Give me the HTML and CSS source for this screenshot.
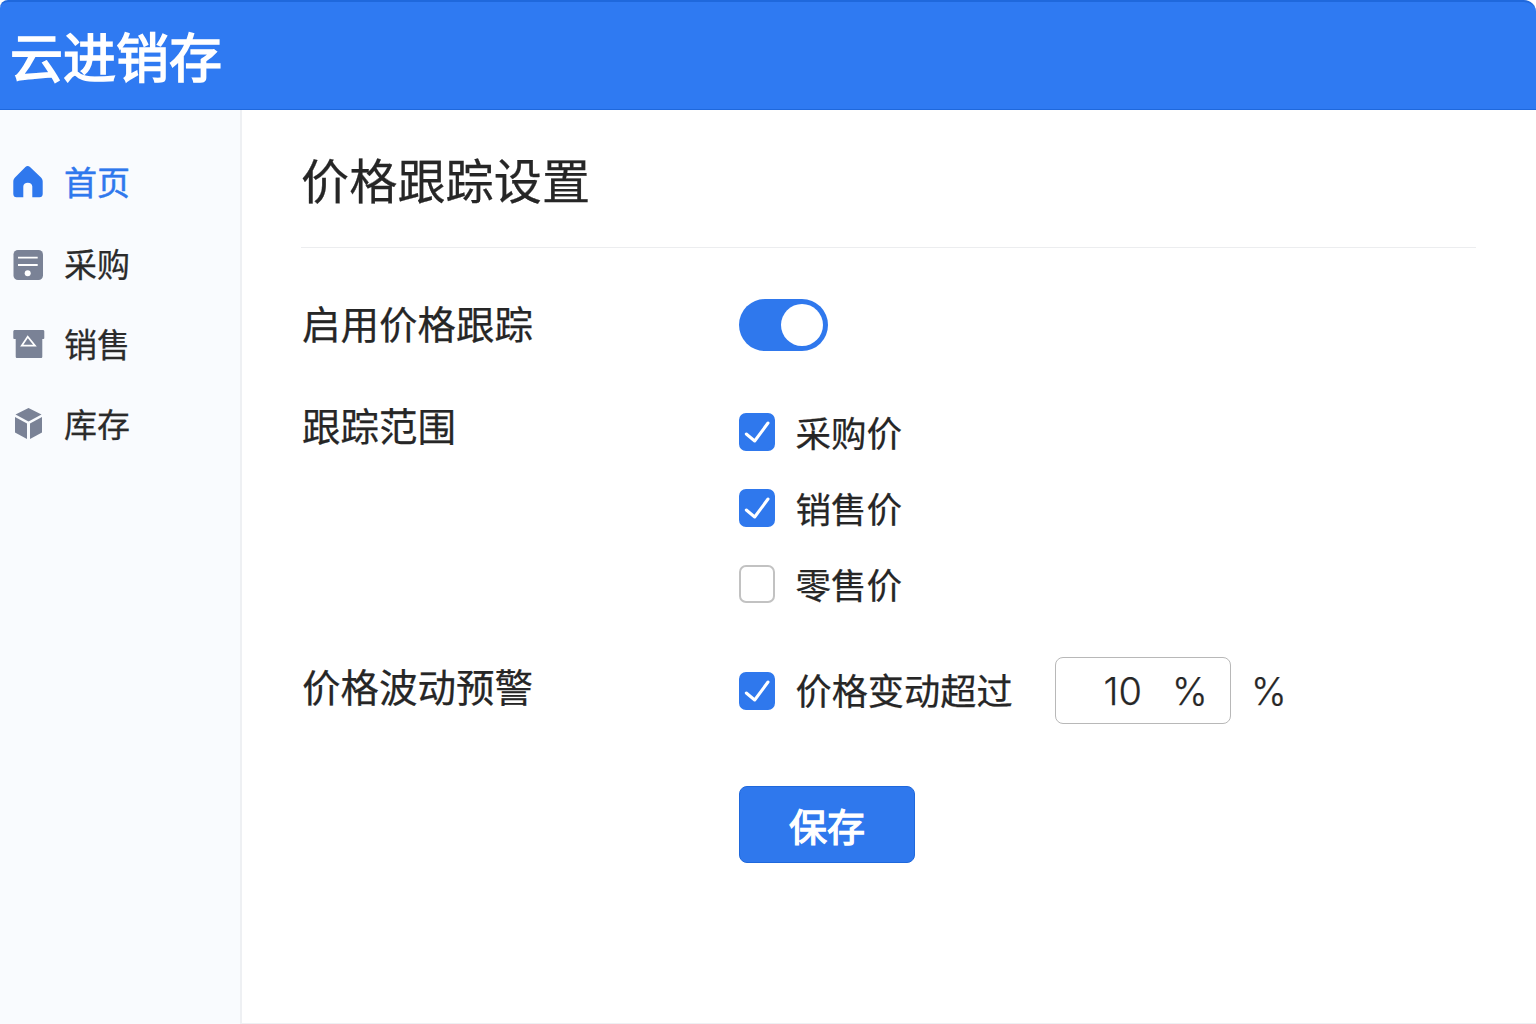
FILE: index.html
```html
<!DOCTYPE html>
<html lang="zh-CN">
<head>
<meta charset="utf-8">
<title>云进销存</title>
<link rel="stylesheet" href="styles.css">
</head>
<body>
<header class="topbar"><span class="brand">云进销存</span></header>
<div class="shell">
  <nav class="sidebar">
    <a class="nav-item active">
      <svg class="nav-icon" viewBox="0 0 32 32"><path fill="#2f78ed" d="M14.700 1C15.500 1 16.300 1.500 17 2L28 12.500C29.200 13.800 29.700 15 29.700 16.500V29C29.700 31 28.500 32.300 26.500 32.300H19.300V21.500C19.300 19 17.500 17.700 14.800 17.700C12.200 17.700 10.300 19 10.300 21.500V32.300H3.500C1.500 32.300 .3 31 .3 29V16.500C.3 15 .8 13.800 2 12.500L12.400 2C13.100 1.500 13.900 1 14.700 1Z"/></svg>
      <span>首页</span>
    </a>
    <a class="nav-item">
      <svg class="nav-icon" viewBox="0 0 32 32"><rect x="0.500" y="3" width="29.500" height="30" rx="4.500" fill="#7a8296"/><path d="M5 10.700H24.700M5 18H24.700" stroke="#fff" stroke-width="1.800" fill="none"/><circle cx="14.700" cy="26.300" r="3" fill="#fff"/></svg>
      <span>采购</span>
    </a>
    <a class="nav-item">
      <svg class="nav-icon" viewBox="0 0 32 32"><path fill="#7a8296" d="M0.300 4.500C.3 3.500 1 3 2 3H29.800C30.800 3 31.300 3.500 31.300 4.500V11C31.300 11.700 30.800 12 30 12H29.300V29.500C29.300 30.500 28.800 31 27.800 31H4.200C3.200 31 2.700 30.500 2.700 29.500V12H1.500C.8 12 .3 11.700 .3 11Z"/><path d="M8.700 18.700L14.700 9.700 22 18.700Z" fill="none" stroke="#fff" stroke-width="1.700"/></svg>
      <span>销售</span>
    </a>
    <a class="nav-item">
      <svg class="nav-icon" viewBox="0 0 32 32"><path fill="#7a8296" d="M15.500 1L28.500 7.500 15.500 14.500 2.500 7.500Z"/><path fill="#7a8296" d="M2 10L14 16.500V32L2 25.500Z"/><path fill="#7a8296" d="M29 10L17 16.500V32L29 25.500Z"/></svg>
      <span>库存</span>
    </a>
  </nav>
  <main class="content">
    <h1 class="page-title">价格跟踪设置</h1>
    <div class="form">
      <div class="row row-toggle">
        <div class="label">启用价格跟踪</div>
        <div class="toggle"><span class="knob"></span></div>
      </div>
      <div class="row row-scope">
        <div class="label">跟踪范围</div>
        <div class="options">
          <div class="option"><span class="check on"><svg viewBox="0 0 36 38"><path d="M7.300 21L15.700 28 29 10"/></svg></span><span>采购价</span></div>
          <div class="option"><span class="check on"><svg viewBox="0 0 36 38"><path d="M7.300 21L15.700 28 29 10"/></svg></span><span>销售价</span></div>
          <div class="option"><span class="check"></span><span>零售价</span></div>
        </div>
      </div>
      <div class="row row-alert">
        <div class="label">价格波动预警</div>
        <div class="alert">
          <span class="check on"><svg viewBox="0 0 36 38"><path d="M7.300 21L15.700 28 29 10"/></svg></span>
          <span class="alert-text">价格变动超过</span>
          <div class="input"><span class="value">10</span><span class="unit">%</span></div>
          <span class="unit-outer">%</span>
        </div>
      </div>
      <div class="row row-save">
        <div></div>
        <button class="save" type="button">保存</button>
      </div>
    </div>
  </main>
</div>
</body>
</html>
```
FILE: styles.css
```css
* { box-sizing: border-box; }
html, body { margin: 0; height: 100%; }
body {
  width: 1536px;
  height: 1024px;
  overflow: hidden;
  background: #fff;
  color: #262626;
  font-family: "Noto Sans CJK SC", "Inter", "Liberation Sans", sans-serif;
  -webkit-text-stroke: 0.250px currentColor;
}
.topbar {
  height: 110px;
  background: #2f7af2;
  border-top: 2px solid #1f68dc;
  border-bottom: 1px solid #1f68dc;
  border-top-left-radius: 8px;
  border-top-right-radius: 12px;
  display: flex;
  align-items: center;
  padding-left: 10px;
}
.brand {
  color: #fff;
  font-size: 53px;
  font-weight: 400;
  line-height: 1;
  -webkit-text-stroke: 1.600px #fff;
}
.shell { display: flex; height: 914px; }
.sidebar {
  width: 242px;
  background: #f9fbfe;
  border-right: 2px solid #eef0f3;
  padding-top: 32px;
  display: flex;
  flex-direction: column;
}
.nav-item {
  height: 80px;
  padding-left: 13px;
  display: flex;
  align-items: center;
  gap: 19px;
  font-size: 33px;
  color: #2b2b2b;
}
.nav-item.active { color: #2f78ed; height: 78px; margin-bottom: 3px; -webkit-text-stroke: 0.500px #2f78ed; }
.nav-icon { width: 32px; height: 32px; flex: none; overflow: visible; }
.content { flex: 1; padding: 0 60px 0 59px; border-bottom: 1px solid #eef0f3; }
.page-title {
  margin: 0;
  height: 138px;
  border-bottom: 1px solid #ecedef;
  display: flex;
  align-items: center;
  font-size: 48.200px;
  font-weight: 400;
  line-height: 1;
}
.row { display: grid; grid-template-columns: 438px 1fr; }
.label { font-size: 38.500px; line-height: 56px; color: #262626; padding-left: 1px; }
.row-toggle { padding-top: 46px; align-items: center; }
.row-toggle .label { padding-bottom: 6px; }
.toggle {
  width: 89px;
  height: 52px;
  border-radius: 26px;
  background: #2f78ed;
  position: relative;
}
.knob {
  position: absolute;
  right: 5px;
  top: 5px;
  width: 42px;
  height: 42px;
  border-radius: 50%;
  background: #fff;
}
.row-scope { padding-top: 36px; }
.row-scope .label { padding-top: 4px; }
.options { display: flex; flex-direction: column; padding-top: 1.500px; }
.option {
  display: flex;
  align-items: center;
  gap: 20.500px;
  height: 76px;
  font-size: 35.500px;
}
.check {
  width: 36px;
  height: 38px;
  flex: none;
  border-radius: 7px;
  border: 2px solid #c2c2c2;
  background: #fff;
  display: block;
}
.check.on { background: #2f78ed; border-color: #2f78ed; }
.check svg { display: block; margin: -2px; width: 36px; height: 38px; }
.check path { fill: none; stroke: #fff; stroke-width: 3; stroke-linecap: round; stroke-linejoin: round; }
.row-alert { padding-top: 35.500px; align-items: center; }
.row-alert .label { padding-bottom: 11px; }
.alert { display: flex; align-items: center; font-size: 36.200px; }
.alert-text { margin-left: 20.500px; width: 259px; padding-bottom: 4px; }
.input {
  width: 176.500px;
  height: 67px;
  border: 1.500px solid #b8b8b8;
  border-radius: 8px;
  display: flex;
  align-items: center;
  font-family: "Inter", "Liberation Sans", sans-serif;
  font-size: 38px;
  font-weight: 300;
  padding-left: 48px;
}
.unit { margin-left: 30px; font-size: 38px; }
.unit-outer { margin-left: 20px; font-family: "Inter", "Liberation Sans", sans-serif; font-weight: 300; font-size: 38px; }
.row-save { padding-top: 62px; }
.save {
  width: 176px;
  height: 77px;
  background: #2f78ed;
  border: 1px solid #1f68dc;
  border-radius: 8px;
  color: #fff;
  font-family: inherit;
  font-size: 38px;
  font-weight: 400;
  padding: 0;
  -webkit-text-stroke: 1.300px #fff;
}
```
